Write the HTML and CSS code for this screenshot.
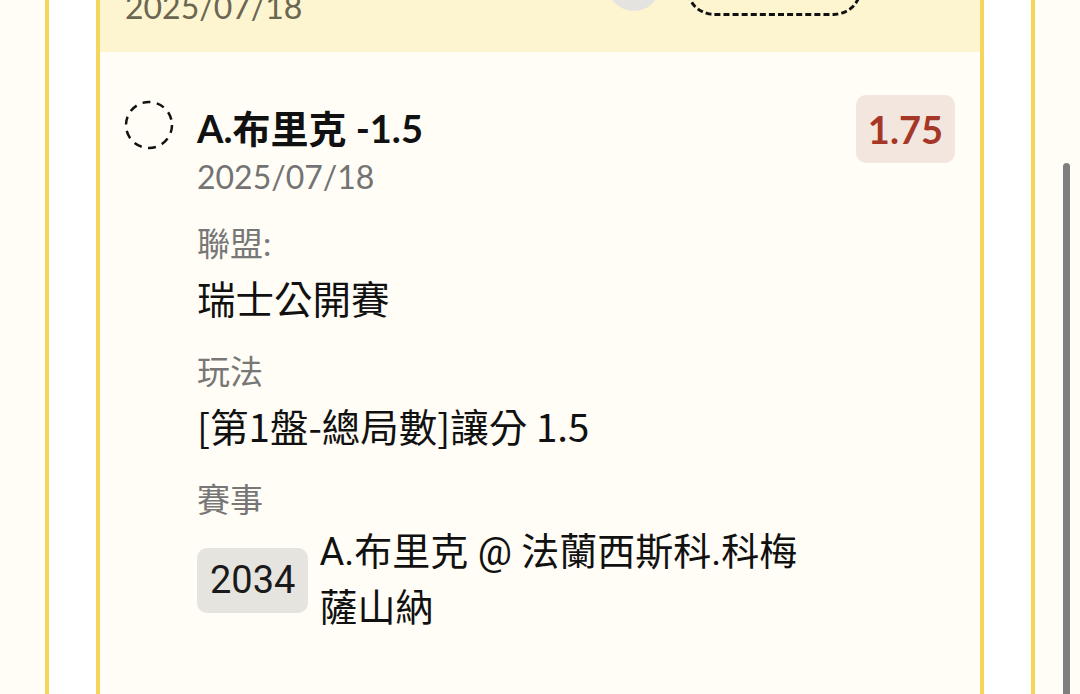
FILE: index.html
```html
<!DOCTYPE html>
<html lang="zh-Hant">
<head>
  <meta charset="UTF-8">
  <meta name="viewport" content="width=device-width, initial-scale=1.0">
  <title>投注單</title>
  <link rel="stylesheet" href="styles.css">
</head>
<body>
  <div class="frame">
    <div class="card">

      <!-- Previous selection (scrolled past) -->
      <div class="card-head">
        <span class="head-date">2025/07/18</span>
        <span class="head-circle"><span class="head-dot"></span></span>
        <span class="head-pill"></span>
      </div>

      <!-- Selection -->
      <div class="card-body">
        <div class="pick-row">
          <svg class="pick-check" width="50" height="50" viewBox="0 0 50 50">
            <circle cx="25" cy="25" r="23" fill="none" stroke="#111" stroke-width="2.5" stroke-dasharray="8 6.45"/>
          </svg>
          <div class="pick-info">
            <div class="pick-title">A.布里克 -1.5</div>
            <div class="pick-date">2025/07/18</div>

            <div class="field">
              <div class="field-label">聯盟:</div>
              <div class="field-value">瑞士公開賽</div>
            </div>
            <div class="field">
              <div class="field-label">玩法</div>
              <div class="field-value">[第1盤-總局數]讓分 1.5</div>
            </div>
            <div class="field">
              <div class="field-label">賽事</div>
              <div class="match">
                <span class="match-no">2034</span>
                <span class="match-name">A.布里克 @ 法蘭西斯科.科梅薩山納</span>
              </div>
            </div>
          </div>
          <span class="odds">1.75</span>
        </div>
      </div>

    </div>
  </div>

  <div class="scrollbar"></div>
</body>
</html>
```

FILE: styles.css
```css
html, body {
  height: 694px;
}
body {
  margin: 0;
  overflow: hidden;
  background-color: #fffdf5;
  font-family: Lato, "Noto Sans CJK TC", sans-serif;
  color: #111;
}
.frame {
  margin: 0 45px;
  min-height: 100%;
  background-color: #fff;
  border-left: 4px solid #f5d55c;
  border-right: 4px solid #f5d55c;
  padding: 0 47px;
}
.card {
  min-height: 720px;
  border-left: 4px solid #f5d55c;
  border-right: 4px solid #f5d55c;
  background-color: #fffdf5;
}

/* header of the card above, mostly scrolled out */
.card-head {
  height: 52px;
  overflow: hidden;
  display: flex;
  align-items: flex-end;
  padding: 0 25px;
  background-color: #fdf4d0;
}
.head-date {
  font-size: 32px;
  line-height: 32px;
  margin-bottom: 29px;
  color: #6b6652;
}
.head-circle {
  width: 52px;
  height: 52px;
  margin: 0 0 41px 306px;
  border-radius: 50%;
  background-color: #e5e3df;
  display: flex;
  justify-content: center;
}
.head-dot {
  width: 12px;
  height: 26px;
  border-radius: 6px;
  background-color: #444;
}
.head-pill {
  width: 176px;
  height: 56px;
  margin: 0 0 36px 26px;
  border: 3px dashed #111;
  border-radius: 30px;
  box-sizing: border-box;
}

.card-body {
  padding: 43px 25px 120px;
}
.pick-row {
  display: flex;
  align-items: flex-start;
}
.pick-check {
  flex: none;
  margin-top: 5px;
  margin-left: -1px;
  margin-right: 23px;
}
.pick-info {
  flex: 1;
}
.pick-title {
  font-size: 38px;
  font-weight: bold;
  line-height: 66px;
}
.pick-date {
  font-size: 32px;
  line-height: 32px;
  color: #737373;
}
.field {
  margin-top: 30px;
}
.field-label {
  font-size: 33px;
  line-height: 40px;
  color: #777;
}
.field-value {
  margin-top: 10px;
  font-family: "Noto Sans CJK TC", sans-serif;
  font-size: 38.5px;
  line-height: 48px;
}
.match {
  display: flex;
  align-items: center;
  margin-top: 5px;
  font-family: Roboto, "Noto Sans CJK TC", sans-serif;
}
.match-no {
  flex: none;
  padding: 0 13px;
  height: 65px;
  line-height: 65px;
  font-size: 38px;
  border-radius: 10px;
  background-color: #e5e4de;
  color: #1a1a1a;
}
.match-name {
  max-width: 500px;
  margin-left: 11px;
  font-size: 38px;
  line-height: 56px;
}
.odds {
  flex: none;
  height: 68px;
  line-height: 68px;
  padding: 0 12px;
  margin-left: 24px;
  border-radius: 10px;
  background-color: #f3e6df;
  color: #a53728;
  font-size: 38px;
  font-weight: bold;
}

/* overlay scrollbar */
.scrollbar {
  position: absolute;
  left: 1063px;
  top: 163px;
  width: 7px;
  height: 560px;
  border-radius: 4px;
  background-color: #7f7f7f;
}
```
